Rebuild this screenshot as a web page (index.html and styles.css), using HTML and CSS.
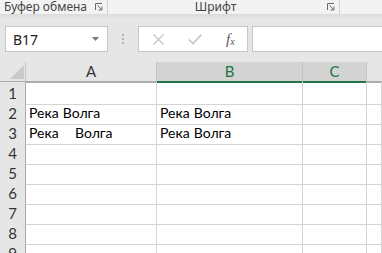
FILE: index.html
```html
<!DOCTYPE html>
<html lang="ru">
<head>
  <meta charset="UTF-8" />
  <title>Книга1 - Excel</title>
  <link rel="stylesheet" href="styles.css">
</head>
<body>

<div class="ribbon">
  <div class="group group-clip">
    <span class="group-label">Буфер обмена</span>
    <svg class="launcher" width="8" height="8" viewBox="0 0 8 8"><path d="M0.5 7V0.5H7" fill="none" stroke="#6a6a6a"/><path d="M2.5 2.5L6.5 6.5M3.5 7H7V3.5" fill="none" stroke="#6a6a6a"/></svg>
  </div>
  <div class="group group-font">
    <span class="group-label center">Шрифт</span>
    <svg class="launcher" width="8" height="8" viewBox="0 0 8 8"><path d="M0.5 7V0.5H7" fill="none" stroke="#6a6a6a"/><path d="M2.5 2.5L6.5 6.5M3.5 7H7V3.5" fill="none" stroke="#6a6a6a"/></svg>
  </div>
</div>

<div class="formula-bar">
  <div class="name-box">
    <span>B17</span>
    <svg width="7" height="4" viewBox="0 0 7 4"><path d="M0 0H7L3.5 4Z" fill="#7a7a7a"/></svg>
  </div>
  <div class="grip">
    <svg width="2" height="10" viewBox="0 0 2 10"><rect y="0" width="2" height="2" fill="#b5b5b5"/><rect y="4" width="2" height="2" fill="#b5b5b5"/><rect y="8" width="2" height="2" fill="#b5b5b5"/></svg>
  </div>
  <div class="fx-buttons">
    <svg width="11" height="11" viewBox="0 0 11 11"><path d="M0.5 0.5L10.5 10.5M10.5 0.5L0.5 10.5" stroke="#c4c4c4" stroke-width="1.3"/></svg>
    <svg width="14" height="11" viewBox="0 0 14 11"><path d="M0.8 5.5L5 9.5L13.2 0.8" fill="none" stroke="#c4c4c4" stroke-width="1.6"/></svg>
    <span class="fx">f<sub>x</sub></span>
  </div>
  <div class="formula-input"></div>
</div>

<div class="sheet">
  <div class="row head">
    <div class="corner"><svg width="14" height="14" viewBox="0 0 14 14"><path d="M14 0V14H0Z" fill="#c9c9c9"/></svg></div>
    <div class="col-head">A</div>
    <div class="col-head active">B</div>
    <div class="col-head active">C</div>
    <div class="col-head rest"></div>
  </div>
  <div class="row"><div class="row-head">1</div><div class="cell"></div><div class="cell"></div><div class="cell"></div><div class="cell"></div></div>
  <div class="row"><div class="row-head">2</div><div class="cell">Река Волга</div><div class="cell">Река Волга</div><div class="cell"></div><div class="cell"></div></div>
  <div class="row"><div class="row-head">3</div><div class="cell">Река    Волга</div><div class="cell">Река Волга</div><div class="cell"></div><div class="cell"></div></div>
  <div class="row"><div class="row-head">4</div><div class="cell"></div><div class="cell"></div><div class="cell"></div><div class="cell"></div></div>
  <div class="row"><div class="row-head">5</div><div class="cell"></div><div class="cell"></div><div class="cell"></div><div class="cell"></div></div>
  <div class="row"><div class="row-head">6</div><div class="cell"></div><div class="cell"></div><div class="cell"></div><div class="cell"></div></div>
  <div class="row"><div class="row-head">7</div><div class="cell"></div><div class="cell"></div><div class="cell"></div><div class="cell"></div></div>
  <div class="row"><div class="row-head">8</div><div class="cell"></div><div class="cell"></div><div class="cell"></div><div class="cell"></div></div>
  <div class="row"><div class="row-head">9</div><div class="cell"></div><div class="cell"></div><div class="cell"></div><div class="cell"></div></div>
</div>

</body>
</html>
```

FILE: styles.css
```css
body { margin: 0; background: #e6e6e6; overflow: hidden; font-family: "Lato", "Liberation Sans", sans-serif; }

.ribbon {
  display: flex; height: 14px; background: #f3f3f3;
  font: 12px/14px "Noto Sans", "Open Sans", sans-serif; color: #444;
}
.group { display: flex; align-items: center; border-right: 1px solid #d2d2d2; }
.group-clip { width: 108px; padding-left: 4px; box-sizing: border-box; }
.group-font { width: 231px; }
.group-label { flex: 1; white-space: nowrap; }
.center { text-align: center; }
.launcher { margin: 0 4px; }

.formula-bar {
  display: flex; height: 26px; padding: 12px 0 10px 5px;
  background: linear-gradient(#dcdcdc 0, #e6e6e6 6px);
}
.name-box {
  display: flex; align-items: center; justify-content: space-between;
  width: 103px; box-sizing: border-box; background: #fff; border: 1px solid #c6c6c6;
  padding: 0 8px 0 7px; font: 14px "Noto Sans", "Open Sans", sans-serif; color: #222;
}
.grip { width: 30px; display: flex; align-items: center; justify-content: center; }
.fx-buttons {
  display: flex; align-items: center; width: 110px; box-sizing: border-box;
  background: #fff; border: 1px solid #c6c6c6; padding: 0 0 0 14px; gap: 24px;
}
.fx { font: italic 15px "Liberation Serif", serif; color: #555; }
.fx sub { font-size: 10px; vertical-align: -1px; }
.formula-input { flex: 1; margin-left: 4px; background: #fff; border: 1px solid #c6c6c6; border-right: none; }

.sheet { background: #fff; font-size: 14px; color: #000; }
.row { display: grid; grid-template-columns: 26px 131px 146px 64px 1fr; height: 20px; }
.row > div { box-sizing: border-box; border-right: 1px solid #d4d4d4; border-bottom: 1px solid #d4d4d4; }

.row.head > div { background: #e6e6e6; border-right-color: #c4c4c4; border-bottom: 2px solid #ababab; }
.corner { display: flex; align-items: flex-end; justify-content: flex-end; padding: 0 1px 2px 0; }
.col-head { text-align: center; line-height: 19px; color: #333; font-size: 15px; }
.row.head .active { background: #d3d3d3; color: #217346; border-bottom-color: #217346; }
.row.head .rest { border-right: none; }

.row-head {
  background: #e6e6e6; color: #333; text-align: center; line-height: 22px; font-size: 15px;
  border-bottom-color: #c4c4c4 !important; border-right-color: #ababab !important;
}
.cell { white-space: pre; padding-left: 3px; line-height: 22px; overflow: hidden; word-spacing: 0.5px; }
```
